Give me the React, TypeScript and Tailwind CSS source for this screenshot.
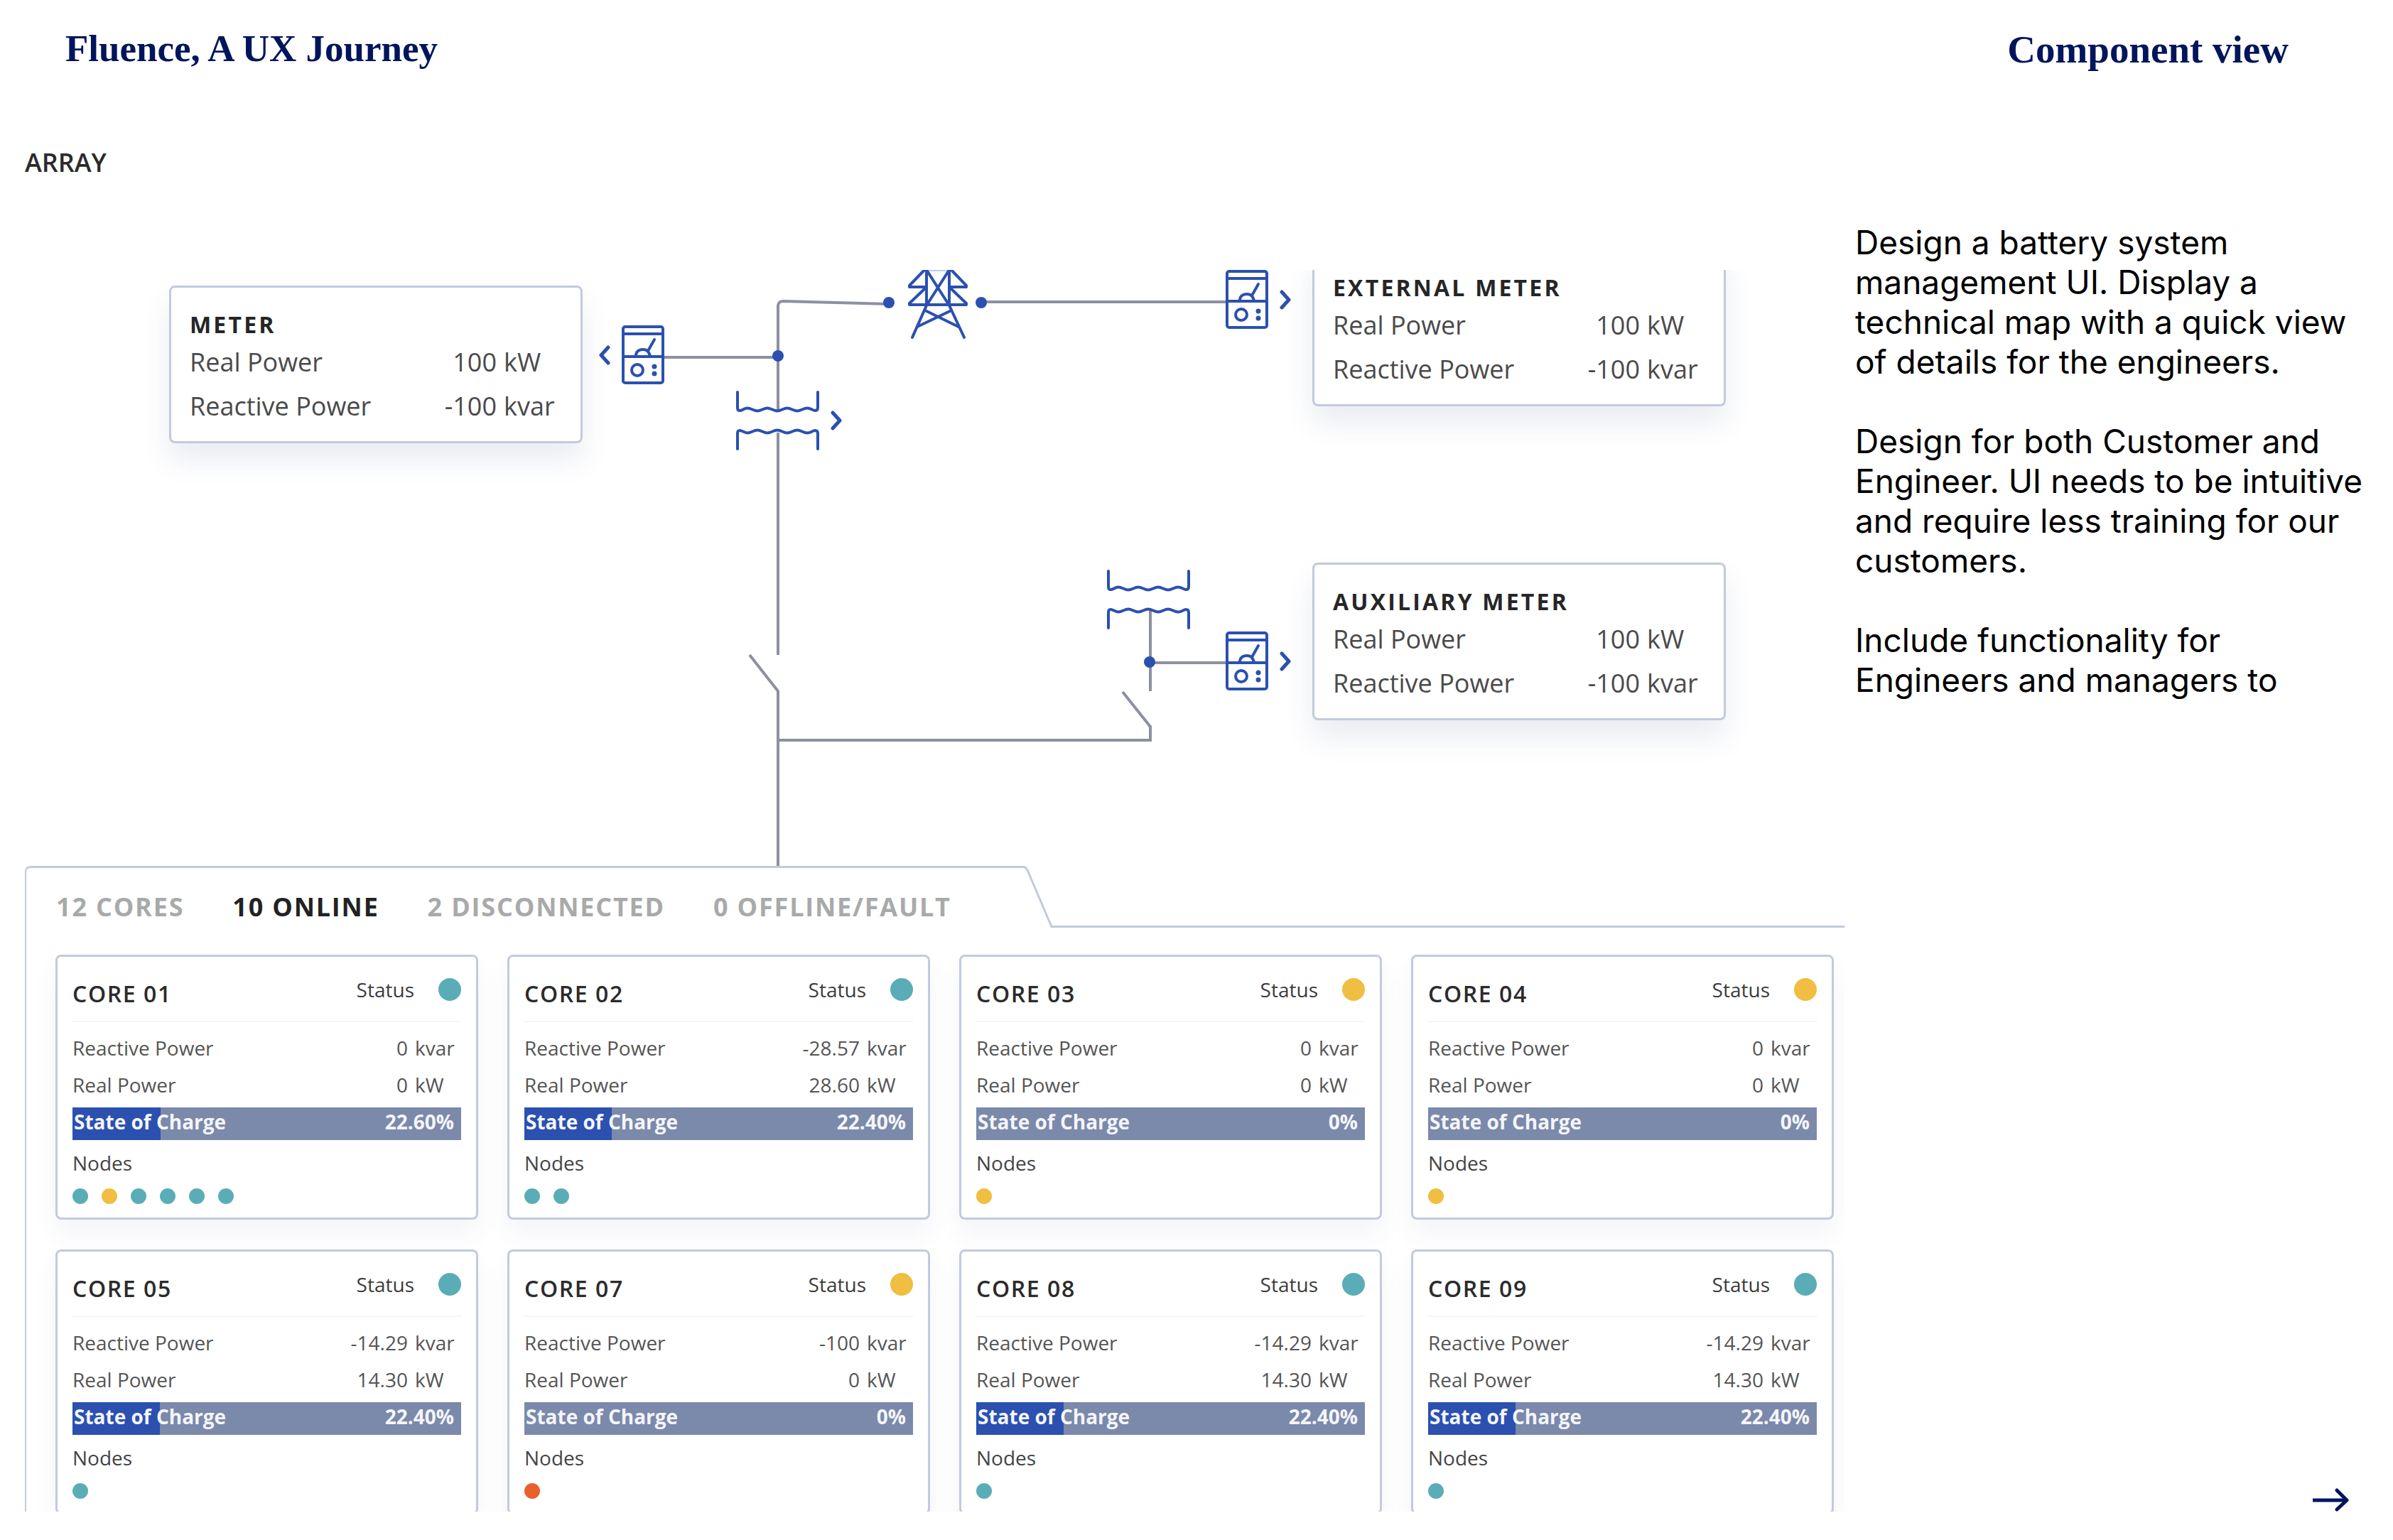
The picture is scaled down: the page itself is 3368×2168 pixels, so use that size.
import React from "react";

type Tone = "online" | "warning" | "fault";

type Core = {
  name: string;
  status: Tone;
  reactive: string;
  real: string;
  charge: number;
  chargeLabel: string;
  nodes: Tone[];
};

const toneClass: Record<Tone, string> = {
  online: "bg-[#5aadb7]",
  warning: "bg-[#f0be40]",
  fault: "bg-[#e8602c]",
};

const cores: Core[] = [
  { name: "CORE 01", status: "online", reactive: "0", real: "0", charge: 22.6, chargeLabel: "22.60%", nodes: ["online", "warning", "online", "online", "online", "online"] },
  { name: "CORE 02", status: "online", reactive: "-28.57", real: "28.60", charge: 22.4, chargeLabel: "22.40%", nodes: ["online", "online"] },
  { name: "CORE 03", status: "warning", reactive: "0", real: "0", charge: 0, chargeLabel: "0%", nodes: ["warning"] },
  { name: "CORE 04", status: "warning", reactive: "0", real: "0", charge: 0, chargeLabel: "0%", nodes: ["warning"] },
  { name: "CORE 05", status: "online", reactive: "-14.29", real: "14.30", charge: 22.4, chargeLabel: "22.40%", nodes: ["online"] },
  { name: "CORE 07", status: "warning", reactive: "-100", real: "0", charge: 0, chargeLabel: "0%", nodes: ["fault"] },
  { name: "CORE 08", status: "online", reactive: "-14.29", real: "14.30", charge: 22.4, chargeLabel: "22.40%", nodes: ["online"] },
  { name: "CORE 09", status: "online", reactive: "-14.29", real: "14.30", charge: 22.4, chargeLabel: "22.40%", nodes: ["online"] },
];

const filters = [
  { label: "12 CORES", active: false },
  { label: "10 ONLINE", active: true },
  { label: "2 DISCONNECTED", active: false },
  { label: "0 OFFLINE/FAULT", active: false },
];

function MeterIcon() {
  return (
    <svg width="60" height="83" viewBox="0 0 60 83" fill="none" stroke="#2b50b0" strokeWidth="4" strokeLinecap="round" strokeLinejoin="round">
      <rect x="2" y="2" width="56" height="79" rx="3" fill="#fff" />
      <path d="M2 12H58M2 44H58" />
      <path d="M20 43C20 37 24 34 30 34C36 34 38 37 40 43M37 36L46 20" />
      <circle cx="22" cy="63" r="8" />
      <circle cx="46" cy="58" r="3.5" fill="#2b50b0" stroke="none" />
      <circle cx="46" cy="68" r="3.5" fill="#2b50b0" stroke="none" />
    </svg>
  );
}

function Chevron({ direction }: { direction: "left" | "right" }) {
  return (
    <svg width="17" height="30" viewBox="0 0 17 30" fill="none" stroke="#2b50b0" strokeWidth="5" strokeLinecap="round" strokeLinejoin="round">
      <path d={direction === "left" ? "M14 4L4 15L14 26" : "M3 4L13 15L3 26"} />
    </svg>
  );
}

function TransformerIcon() {
  const coil =
    "M2 2V24Q2 28 5 28C9 28 11 24.500 16 24.500S25 28.500 30 28.500S39 24.500 44 24.500S53 28.500 58 28.500S67 24.500 72 24.500S81 28.500 86 28.500S95 24.500 100 24.500S108 28 111 28Q115 28 115 24V2";
  return (
    <svg width="117" height="84" viewBox="0 0 117 84" fill="none" stroke="#2b50b0" strokeWidth="4" strokeLinecap="round" strokeLinejoin="round">
      <path d={coil} />
      <path d={coil} transform="translate(0 84) scale(1 -1)" />
    </svg>
  );
}

function PylonIcon() {
  return (
    <svg width="84" height="98" viewBox="0 0 84 98" fill="none" stroke="#2b50b0" strokeWidth="4" strokeLinecap="round" strokeLinejoin="round">
      <path d="M26 1H58" stroke="#c3cce8" strokeWidth="2" />
      <path d="M26 -1V49M58 -1V49" />
      <path d="M24 -1L2 22V24H26M60 -1L82 22V24H58" />
      <path d="M25 25L2 47V49H82V47L59 25" />
      <path d="M26 0L58 50L79 95M58 0L26 50L6 95" />
      <path d="M24 57L71 80M61 57L13 80" />
    </svg>
  );
}

function Wiring() {
  return (
    <svg className="absolute inset-0 h-full w-full" fill="none" stroke="#8c90a0" strokeWidth="4">
      <path d="M935 123H1095" />
      <path d="M1095 197V50Q1096 44 1102 44L1251 48" />
      <path d="M1381 45H1726" />
      <path d="M1095 229V542M1055 542L1095 593V839M1095 662H1619V643L1580 594M1619 480V593M1619 553H1726" />
      <g fill="#2b50b0" stroke="none">
        <circle cx="1095" cy="121" r="8" />
        <circle cx="1251" cy="46" r="8" />
        <circle cx="1381" cy="46" r="8" />
        <circle cx="1618" cy="552" r="8" />
      </g>
    </svg>
  );
}

function Reading({ label, value, unit, unitClass }: { label: string; value: string; unit: string; unitClass: string }) {
  return (
    <div className="flex">
      <dt className="flex-1">{label}</dt>
      <dd className="flex gap-[10px]">
        <span>{value}</span>
        <span className={unitClass}>{unit}</span>
      </dd>
    </div>
  );
}

function MeterCard({ title, place }: { title: string; place: string }) {
  return (
    <section className={`absolute w-[582px] rounded-lg border-3 border-[#c3cade] bg-white pt-[30px] pr-9 pb-[18px] pl-[26px] shadow-[0_24px_40px_rgba(50,70,130,0.10)] ${place}`}>
      <h2 className="text-[32px] leading-[44px] font-bold tracking-widest text-[#262626]">{title}</h2>
      <dl className="text-[36px] leading-[62px] text-[#4a4a4a]">
        <Reading label="Real Power" value="100" unit="kW" unitClass="w-[72px]" />
        <Reading label="Reactive Power" value="-100" unit="kvar" unitClass="w-[72px]" />
      </dl>
    </section>
  );
}

function CoreCard({ core }: { core: Core }) {
  return (
    <article className="rounded-lg border-3 border-[#c3cade] bg-white px-[21px] pb-[19px] shadow-[0_20px_36px_rgba(50,70,130,0.06)]">
      <header className="flex items-start justify-between border-b-2 border-[#f2f5fb] pt-[26px] pb-4">
        <h3 className="pt-1 text-[32px] leading-[44px] font-semibold tracking-wider text-[#2b2b2b]">{core.name}</h3>
        <p className="flex items-center gap-[34px] text-[28px] leading-[40px] text-[#3c3c3c]">
          Status
          <span className={`size-8 rounded-full ${toneClass[core.status]}`} />
        </p>
      </header>
      <dl className="mt-[10px] pr-[9px] text-[28px] leading-[52px] text-[#555]">
        <Reading label="Reactive Power" value={core.reactive} unit="kvar" unitClass="w-[56px]" />
        <Reading label="Real Power" value={core.real} unit="kW" unitClass="w-[56px]" />
      </dl>
      <div className="relative mt-[6px] h-[46px] bg-[#7b89aa]">
        <div className="absolute inset-y-0 left-0 bg-[#2b50b0]" style={{ width: `${core.charge}%` }} />
        <p className="relative flex justify-between pr-[10px] pl-[2px] text-[28px] leading-[40px] font-bold text-[#f4f5fa]">
          <span>State of Charge</span>
          <span>{core.chargeLabel}</span>
        </p>
      </div>
      <p className="mt-3 text-[28px] leading-[40px] text-[#444]">Nodes</p>
      <div className="mt-4 flex gap-[19px]">
        {core.nodes.map((tone, i) => (
          <span key={i} className={`size-[22px] rounded-full ${toneClass[tone]}`} />
        ))}
      </div>
    </article>
  );
}

export default function App() {
  return (
    <div className="flex h-screen flex-col bg-white pb-10 font-['Open_Sans',sans-serif]">
      <header className="flex justify-between pt-9 pr-[147px] pb-[101px] pl-[92px] font-['Liberation_Serif',serif] font-bold text-[#00155c]">
        <p className="text-[53px] leading-[64px]">Fluence, A UX Journey</p>
        <p className="text-[55px] leading-[68px]">Component view</p>
      </header>

      <div className="flex min-h-0 flex-1">
        <main className="flex min-w-0 flex-1 flex-col">
          <h1 className="pl-[35px] text-[36px] leading-[48px] font-semibold text-[#2b2b2b]">ARRAY</h1>

          <div className="relative mt-[127px] h-[839px] shrink-0 overflow-hidden">
            <Wiring />
            <div className="absolute top-0 left-[1278px]">
              <PylonIcon />
            </div>
            <button type="button" aria-label="Meter" className="absolute top-[78px] left-[842px] flex items-center gap-4">
              <Chevron direction="left" />
              <MeterIcon />
            </button>
            <button type="button" aria-label="Main transformer" className="absolute top-[170px] left-[1036px] flex items-center gap-4">
              <TransformerIcon />
              <Chevron direction="right" />
            </button>
            <button type="button" aria-label="External meter" className="absolute top-0 left-[1725px] flex items-center gap-4">
              <MeterIcon />
              <Chevron direction="right" />
            </button>
            <div className="absolute top-[422px] left-[1558px]">
              <TransformerIcon />
            </div>
            <button type="button" aria-label="Auxiliary meter" className="absolute top-[509px] left-[1725px] flex items-center gap-4">
              <MeterIcon />
              <Chevron direction="right" />
            </button>
            <MeterCard title="METER" place="top-[22px] left-[238px]" />
            <MeterCard title="EXTERNAL METER" place="top-[-30px] left-[1847px]" />
            <MeterCard title="AUXILIARY METER" place="top-[412px] left-[1847px]" />
          </div>

          <section className="flex min-h-0 flex-1 flex-col overflow-hidden pl-[35px]">
            <div className="flex shrink-0">
              <nav className="flex gap-[68px] rounded-tl-lg border-t-3 border-l-2 border-[#c3cade] pt-[31px] pr-[101px] pb-[5px] pl-[42px]">
                {filters.map((f) => (
                  <button
                    key={f.label}
                    type="button"
                    className={`text-[36px] leading-[48px] font-bold tracking-wider ${f.active ? "text-[#222]" : "text-[#a8aaaa]"}`}
                  >
                    {f.label}
                  </button>
                ))}
              </nav>
              <svg width="42" height="87" viewBox="0 0 42 87" fill="none" stroke="#c3cade" strokeWidth="3">
                <path d="M0 1.500Q4 1.500 6 6L40 85.500H42" />
              </svg>
              <div className="flex-1 border-b-3 border-[#c3cade]" />
            </div>
            <div className="grid grid-cols-4 gap-x-[41px] gap-y-[42px] border-l-2 border-[#c3cade] pt-[38px] pr-[15px] pl-[41px]">
              {cores.map((core) => (
                <CoreCard key={core.name} core={core} />
              ))}
            </div>
          </section>
        </main>

        <aside className="flex w-[772px] flex-col justify-between pt-[108px] pr-9 pl-[15px]">
          <div className="space-y-14 font-['Inter',sans-serif] text-[46px] leading-[56px] text-black">
            <p>Design a battery system management UI. Display a technical map with a quick view of details for the engineers.</p>
            <p>Design for both Customer and Engineer. UI needs to be intuitive and require less training for our customers.</p>
            <p>Include functionality for Engineers and managers to</p>
          </div>
          <a href="#next" aria-label="Next" className="mr-[22px] self-end">
            <svg width="60" height="34" viewBox="0 0 60 34" fill="none" stroke="#00155c" strokeWidth="5">
              <path d="M5 18H52" />
              <path d="M39 4L53 18L39 31" strokeLinecap="round" strokeLinejoin="round" />
            </svg>
          </a>
        </aside>
      </div>
    </div>
  );
}
